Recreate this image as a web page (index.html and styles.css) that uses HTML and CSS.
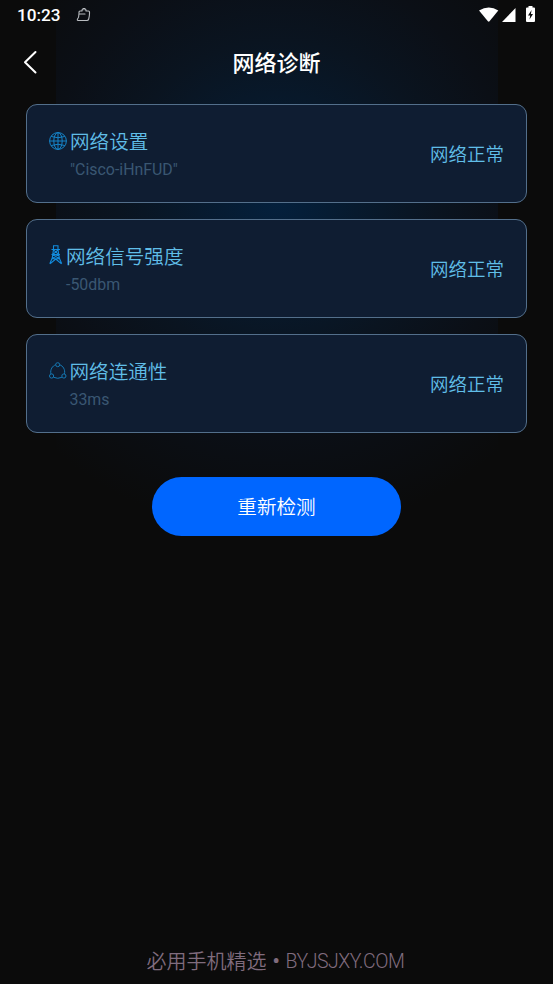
FILE: index.html
```html
<!DOCTYPE html>
<html lang="zh-CN">
<head>
<meta charset="utf-8">
<title>网络诊断</title>
<link rel="stylesheet" href="styles.css">
</head>
<body>
<div class="screen">
  <div class="status-bar">
    <span class="clock">10:23</span>
    <svg class="icon-clean" width="16" height="16" viewBox="0 0 16 16" fill="none" stroke="#b9bcc0" stroke-width="1.100" stroke-linejoin="round" stroke-linecap="round"><path d="M3 6.500V5Q3 4 4 4H6V2.800H7V1.500H9V2.800H10V4H12.500Q13.500 4 13.500 5V6.500Q13.500 9 12.700 12Q12.300 13.500 11 13.500H2Q.8 13.500 1.500 12.200Q3 10.500 3 6.500Z"/><path d="M3.500 7H9"/></svg>
    <svg class="icon-wifi" width="20" height="16" viewBox="0 0 20 16" fill="#fff"><path d="M0 3.500Q10-2.500 19.300 3.500L10.500 14.300Q9.700 15.200 8.900 14.300Z"/></svg>
    <svg class="icon-signal" width="14" height="14" viewBox="0 0 14 14" fill="#fff"><path d="M13.500 0V14H0Z"/></svg>
    <svg class="icon-battery" width="9" height="16" viewBox="0 0 9 16"><path fill="#fff" d="M2.500 0H6.500V1.500H8Q9 1.500 9 2.500V15Q9 16 8 16H1Q0 16 0 15V2.500Q0 1.500 1 1.500H2.500Z"/><path fill="#0b0b0c" d="M5.600 4L2 9.500H4.200L3.500 13.500L7 8H4.900Z"/></svg>
  </div>
  <header class="nav">
    <svg class="back" width="16" height="24" viewBox="0 0 16 24" fill="none" stroke="#fff" stroke-width="2" stroke-linecap="round" stroke-linejoin="round"><path d="M13.500 2L3 12.300L13.500 22.500"/></svg>
    <h1 class="nav-title">网络诊断</h1>
  </header>
  <main class="cards">
    <section class="card">
      <svg class="card-icon" width="18" height="20" viewBox="0 0 18 20" fill="none" stroke="#1584c9" stroke-width="1"><circle cx="9" cy="10" r="8.400"/><ellipse cx="9" cy="10" rx="4.200" ry="8.400"/><path d="M.6 10H17.400M9 1.600V18.400M2.200 5.500Q9 8 15.800 5.500M2.200 14.500Q9 12 15.800 14.500"/></svg>
      <div class="info">
        <h2 class="card-title">网络设置</h2>
        <p class="card-sub">"Cisco-iHnFUD"</p>
      </div>
      <span class="result">网络正常</span>
    </section>
    <section class="card card-signal">
      <svg class="card-icon" width="14" height="20" viewBox="0 0 14 20" fill="none" stroke="#128bdd" stroke-width="1.100"><path d="M4 .8H9.500M4.500 .8V4.500L3.200 13L.8 18.800M9 .8V4.500L10.300 13L12.700 18.800M2.500 4.500H11M2.500 9.500H11M4.500 4.800L9.500 9.300M9 4.800L4 9.300M4 9.800L10.300 13.500M9.500 9.800L3.200 13.500M3 13.700H10.500M6.750 14L1 18.800M6.750 14L12.500 18.800"/></svg>
      <div class="info">
        <h2 class="card-title">网络信号强度</h2>
        <p class="card-sub">-50dbm</p>
      </div>
      <span class="result">网络正常</span>
    </section>
    <section class="card card-link">
      <svg class="card-icon" width="18" height="20" viewBox="0 0 18 20" fill="none" stroke="#1579b5" stroke-width="1"><circle cx="8.700" cy="3.700" r="2"/><circle cx="2.600" cy="15" r="2.100"/><circle cx="14.900" cy="15" r="2.100"/><path d="M6.700 3.800C3.500 4.800 1 8.500 1.900 12.900M10.700 3.800C13.900 4.800 16.400 8.500 15.500 12.900M4.600 16.300Q8.800 18.300 12.900 16.300"/></svg>
      <div class="info">
        <h2 class="card-title">网络连通性</h2>
        <p class="card-sub">33ms</p>
      </div>
      <span class="result">网络正常</span>
    </section>
  </main>
  <button class="retry" type="button">重新检测</button>
  <footer class="credit"><span>必用手机精选</span><span class="dot">•</span><span class="site">BYJSJXY.COM</span></footer>
</div>
</body>
</html>
```
FILE: styles.css
```css
* {
  box-sizing: border-box;
  margin: 0;
  padding: 0;
}

body {
  background: #0b0b0b;
  font-family: Roboto, "Noto Sans CJK SC", sans-serif;
}

.screen {
  display: flex;
  flex-direction: column;
  align-items: center;
  height: 984px;
  background: radial-gradient(circle at 50% 200px, #04203d 0, #071a2e 80px, #0a1420 160px, #0b0f16 235px, #0b0b0b 335px) center top / 442px 560px no-repeat #0b0b0b;
}

.status-bar {
  display: flex;
  align-items: center;
  width: 100%;
  height: 30px;
  padding: 0 18px 0 17px;
}

.clock {
  color: #fff;
  font-size: 17.2px;
  font-weight: 500;
  line-height: 30px;
}

.icon-clean {
  margin-left: 15px;
}

.icon-wifi {
  margin-left: auto;
}

.icon-signal {
  margin-left: 3px;
}

.icon-battery {
  margin-left: 10px;
  margin-top: -2px;
}

.nav {
  display: grid;
  grid-template-columns: 40px 1fr 40px;
  align-items: center;
  width: 100%;
  height: 64px;
  padding: 0 22px;
}

.nav-title {
  grid-column: 2;
  color: #fff;
  font-size: 22px;
  font-weight: 500;
  line-height: 32px;
  padding-top: 4px;
  text-align: center;
}

.cards {
  display: flex;
  flex-direction: column;
  gap: 16px;
  width: 501px;
  margin-top: 10px;
}

.card {
  display: flex;
  align-items: flex-start;
  height: 99px;
  padding: 24px 22px 0 22px;
  border: 1px solid #536f8b;
  border-radius: 11px;
  background: #0f1d32;
}

.card-icon {
  flex: none;
  margin-top: 2px;
}

.card-signal .card-icon {
  margin-top: 1px;
}

.info {
  flex: 1;
  margin-left: 3px;
}

.card-link .info {
  margin-left: 2.5px;
}

.card-title {
  color: #60bee8;
  font-size: 19.6px;
  font-weight: 350;
  line-height: 28px;
}

.card-sub {
  color: #3a5772;
  font-size: 15.9px;
  line-height: 20px;
  margin-top: 3px;
}

.result {
  color: #60bee8;
  font-size: 18.5px;
  font-weight: 350;
  line-height: 28px;
  margin-top: 12px;
}

.retry {
  width: 249px;
  height: 59px;
  margin-top: 44px;
  padding-top: 2px;
  border: 0;
  border-radius: 30px;
  background: #0066ff;
  color: #fff;
  font-family: inherit;
  font-size: 19.6px;
  font-weight: 350;
  line-height: 28px;
}

.credit {
  display: flex;
  width: 260px;
  margin-top: auto;
  padding-bottom: 7px;
  color: #806c7e;
  font-family: "Noto Sans CJK SC", sans-serif;
  font-size: 20px;
  font-weight: 350;
  line-height: 30px;
  white-space: nowrap;
}

.dot {
  width: 19px;
  font-family: Roboto, sans-serif;
  font-weight: 700;
  text-align: center;
}

.site {
  padding-top: 1px;
  font-family: Roboto, sans-serif;
  font-size: 19.5px;
  font-weight: 350;
  letter-spacing: -0.5px;
}
```
